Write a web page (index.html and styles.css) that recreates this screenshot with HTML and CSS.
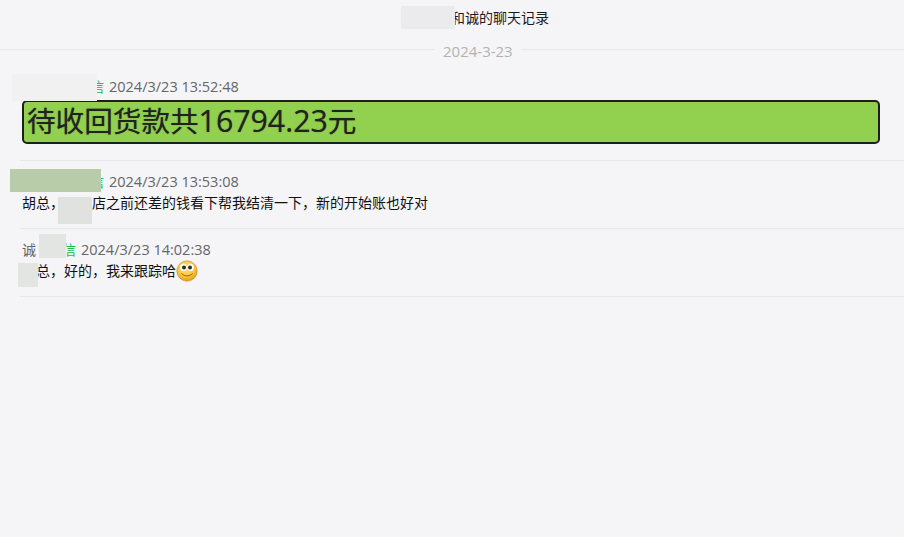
FILE: index.html
```html
<!DOCTYPE html>
<html lang="zh-CN">
<head>
<meta charset="utf-8">
<title>聊天记录</title>
<link rel="stylesheet" href="styles.css">
</head>
<body>
<div class="page">
  <header class="title">胡某某和诚的聊天记录</header>
  <div class="date-row">
    <span class="line line-left"></span>
    <span class="date">2024-3-23</span>
    <span class="line line-right"></span>
  </div>
  <main class="list">
    <article class="msg msg-first">
      <div class="meta"><span class="name">胡某某<span class="app">微信</span></span><time class="time">2024/3/23 13:52:48</time></div>
      <div class="banner">待收回货款共<span class="amount">16794.23</span>元</div>
    </article>
    <article class="msg">
      <div class="meta"><span class="name">胡某某<span class="app">微信</span></span><time class="time">2024/3/23 13:53:08</time></div>
      <p class="text">胡总，<span class="gap"></span>店之前还差的钱看下帮我结清一下，新的开始账也好对</p>
    </article>
    <article class="msg">
      <div class="meta"><span class="name">诚<span class="app">微信</span></span><time class="time">2024/3/23 14:02:38</time></div>
      <p class="text">胡总，好的，我来跟踪哈<svg class="emoji" viewBox="0 0 22 22" aria-hidden="true"><defs><radialGradient id="face" cx="0.45" cy="0.35" r="0.7"><stop offset="0" stop-color="#fde680"/><stop offset="0.6" stop-color="#f9c63c"/><stop offset="1" stop-color="#e3920f"/></radialGradient></defs><circle cx="11" cy="11" r="10.2" fill="url(#face)" stroke="#c98a1e" stroke-width="0.6"/><ellipse cx="7.4" cy="7.4" rx="3.2" ry="3.6" fill="#fff"/><ellipse cx="14.6" cy="7.4" rx="3.2" ry="3.6" fill="#fff"/><circle cx="8" cy="7.6" r="2" fill="#2b2b2b"/><circle cx="14" cy="7.6" r="2" fill="#2b2b2b"/><path d="M5.6 13.8 Q11 18.4 16.4 13.8" fill="none" stroke="#9a6512" stroke-width="1" stroke-linecap="round"/></svg></p>
    </article>
  </main>
  <div class="patch patch-title"></div>
  <div class="patch patch-name1"></div>
  <div class="patch patch-name2"></div>
  <div class="patch patch-word2"></div>
  <div class="patch patch-name3"></div>
  <div class="patch patch-word3"></div>
</div>
</body>
</html>
```
FILE: styles.css
```css
* { box-sizing: border-box; }
html, body { margin: 0; padding: 0; height: 100%; }
body {
  background: #f5f5f8;
  font-family: "Open Sans", "Noto Sans CJK SC", sans-serif;
  font-size: 14px;
  overflow: hidden;
}
.page { position: relative; width: 904px; height: 537px; }
.title {
  height: 39px;
  padding: 7px 0 0 54px;
  line-height: 22px;
  text-align: center;
  color: #1a1a1a;
  font-size: 14px;
}
.date-row { display: flex; align-items: center; height: 20px; }
.line { display: block; height: 1px; background: #e7e7e9; }
.line-left { width: 435px; }
.line-right { flex: 1; }
.date { padding: 4px 8px 0; color: #b2b2b2; font-size: 15px; line-height: 20px; white-space: nowrap; }
.list { margin-left: 20px; padding-top: 7px; }
.msg { border-bottom: 1px solid #e7e7e9; padding: 10px 0 14px 2px; height: 68px; }
.msg-first { height: 95px; padding-bottom: 0; }
.msg-first .meta { margin-bottom: 3px; }
.meta { display: flex; height: 21px; line-height: 22px; color: #666; white-space: nowrap; }
.app { padding-left: 12px; color: #1fb84f; }
.time { margin-left: 5px; font-size: 14.5px; }
.banner {
  width: 858px;
  height: 44px;
  padding-left: 3px;
  border: 2px solid #1e1e1e;
  border-radius: 5px;
  background: #92d050;
  color: #222;
  font-size: 28.6px;
  line-height: 38px;
  white-space: nowrap;
  text-shadow: 0 0 1px rgba(30, 50, 10, 0.6);
}
.amount { font-size: 30.3px; }
.text { display: flex; align-items: center; margin: 0; height: 22px; line-height: 22px; color: #111; white-space: nowrap; }
.gap { width: 28px; flex: none; }
.emoji { width: 22px; height: 22px; flex: none; }
.patch { position: absolute; }
.patch-title { left: 401px; top: 6px; width: 54px; height: 23px; background: #ebebed; }
.patch-name1 { left: 12px; top: 74px; width: 85px; height: 27px; background: #f0f1f0; }
.patch-name2 { left: 10px; top: 169px; width: 91px; height: 23px; background: #b9cca9; }
.patch-word2 { left: 58px; top: 197px; width: 34px; height: 27px; background: #e0e2e0; }
.patch-name3 { left: 39px; top: 234px; width: 27px; height: 24px; background: #e3e5e3; }
.patch-word3 { left: 18px; top: 263px; width: 20px; height: 24px; background: #e3e5e3; }
```
